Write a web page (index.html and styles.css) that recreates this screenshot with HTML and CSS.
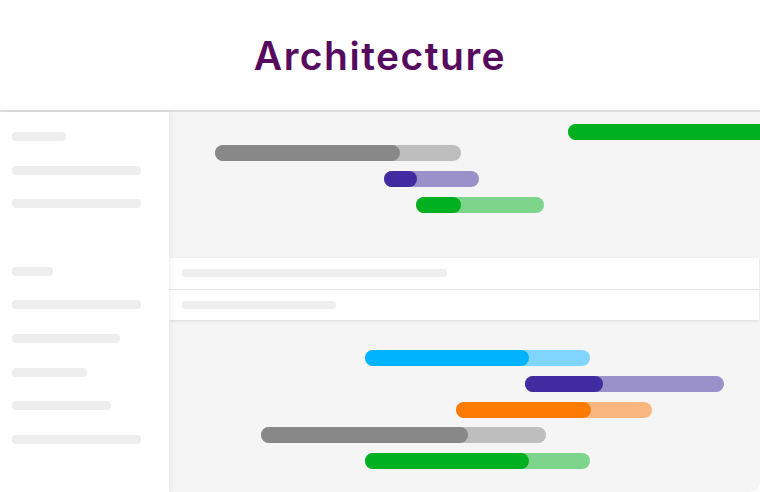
FILE: index.html
```html
<!DOCTYPE html>
<html lang="en">
<head>
<meta charset="utf-8">
<title>Architecture</title>
<link rel="stylesheet" href="styles.css">
</head>
<body>
<div class="page">
  <header class="header">
    <h1 class="title">Architecture</h1>
  </header>
  <div class="body">
    <aside class="sidebar">
      <div class="sk" style="width:54px"></div>
      <div class="sk" style="width:129px"></div>
      <div class="sk" style="width:129px"></div>
      <div class="sk sk-empty"></div>
      <div class="sk" style="width:41px"></div>
      <div class="sk" style="width:129px"></div>
      <div class="sk" style="width:108px"></div>
      <div class="sk" style="width:75px"></div>
      <div class="sk" style="width:99px"></div>
      <div class="sk" style="width:129px"></div>
    </aside>
    <main class="main">
      <section class="gantt gantt-top">
        <div class="lane lane-short"><div class="bar green" style="margin-left:399px;width:260px"><div class="done" style="width:260px"></div></div></div>
        <div class="lane"><div class="bar gray" style="margin-left:46px;width:246px"><div class="done" style="width:185px"></div></div></div>
        <div class="lane"><div class="bar purple" style="margin-left:215px;width:95px"><div class="done" style="width:33px"></div></div></div>
        <div class="lane"><div class="bar green" style="margin-left:247px;width:128px"><div class="done" style="width:45px"></div></div></div>
      </section>
      <section class="rows">
        <div class="row"><div class="row-sk" style="width:265px"></div></div>
        <div class="row"><div class="row-sk" style="width:154px"></div></div>
      </section>
      <section class="gantt gantt-bottom">
        <div class="lane"><div class="bar blue" style="margin-left:196px;width:225px"><div class="done" style="width:164px"></div></div></div>
        <div class="lane"><div class="bar purple" style="margin-left:356px;width:199px"><div class="done" style="width:78px"></div></div></div>
        <div class="lane"><div class="bar orange" style="margin-left:287px;width:196px"><div class="done" style="width:135px"></div></div></div>
        <div class="lane"><div class="bar gray" style="margin-left:92px;width:285px"><div class="done" style="width:207px"></div></div></div>
        <div class="lane"><div class="bar green" style="margin-left:196px;width:225px"><div class="done" style="width:164px"></div></div></div>
      </section>
    </main>
  </div>
</div>
</body>
</html>
```

FILE: styles.css
```css
* { box-sizing: border-box; }
html, body {
  margin: 0;
  padding: 0;
  background: #ffffff;
}
.page {
  width: 760px;
  height: 492px;
  overflow: hidden;
  display: flex;
  flex-direction: column;
}
.header {
  height: 112px;
  flex: none;
  border-bottom: 2px solid #dddddd;
  display: flex;
  justify-content: center;
  align-items: flex-start;
}
.title {
  margin: 31px 0 0;
  font-family: "Inter", "Open Sans", sans-serif;
  font-weight: 600;
  font-size: 39px;
  line-height: 50px;
  color: #560b5f;
  letter-spacing: 1.5px;
}
.body {
  flex: 1;
  display: flex;
  min-height: 0;
}
.sidebar {
  width: 169px;
  flex: none;
  background: #ffffff;
  padding: 20px 0 0 12px;
  display: flex;
  flex-direction: column;
  gap: 24.67px;
  position: relative;
  z-index: 1;
  box-shadow: 2px 0 5px rgba(0, 0, 0, 0.06);
}
.sk {
  height: 9px;
  border-radius: 4px;
  background: #eeeeee;
  flex: none;
}
.sk-empty { background: transparent; }
.main {
  flex: 1;
  background: #f5f5f5;
  overflow: hidden;
  border-bottom-right-radius: 10px;
  display: flex;
  flex-direction: column;
}
.gantt {
  display: flex;
  flex-direction: column;
}
.gantt-top {
  height: 146px;
  flex: none;
  padding-top: 12px;
}
.gantt-bottom {
  padding-top: 30px;
}
.lane {
  height: 25.75px;
  flex: none;
  display: flex;
}
.lane-short { height: 21px; }
.bar {
  height: 16px;
  border-radius: 8px;
  flex: none;
  display: flex;
}
.done {
  height: 16px;
  border-radius: 8px;
}
.green { background: #7dd48b; }
.green .done { background: #00b020; }
.gray { background: #bebebe; }
.gray .done { background: #888888; }
.purple { background: #9b91ca; }
.purple .done { background: #412ba0; }
.blue { background: #80d5fd; }
.blue .done { background: #00b3ff; }
.orange { background: #f8b880; }
.orange .done { background: #ff7b00; }
.rows {
  flex: none;
  margin-right: 1px;
  background: #ffffff;
  box-shadow: 0 1px 3px rgba(0, 0, 0, 0.1);
}
.row {
  height: 32px;
  padding: 11px 0 0 13px;
  border-bottom: 1px solid #e6e6e6;
}
.row:last-child {
  height: 30px;
  padding-top: 11px;
  border-bottom: none;
}
.row-sk {
  height: 8px;
  border-radius: 3px;
  background: #eeeeee;
}
```
